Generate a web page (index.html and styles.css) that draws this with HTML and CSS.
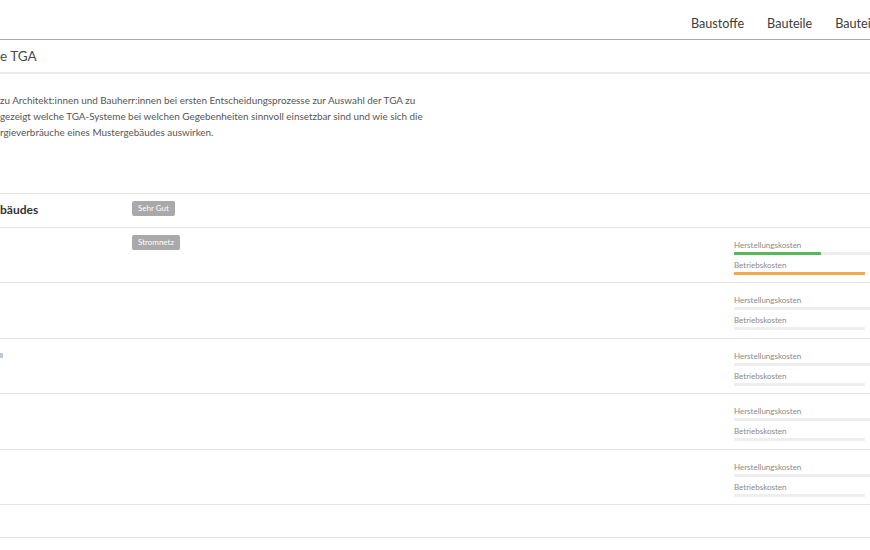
FILE: index.html
```html
<!DOCTYPE html>
<html lang="de">
<head>
    <meta charset="UTF-8">
    <meta name="viewport" content="width=device-width, initial-scale=1.0">
    <title>TGA</title>
    <link rel="stylesheet" href="styles.css">
</head>
<body>
    <header class="topnav">
        <a href="#">Baustoffe</a>
        <a href="#">Bauteile</a>
        <a href="#">Bauteilkatalog</a>
    </header>

    <div class="page-title">e TGA</div>

    <div class="intro">
        <p>zu Architekt:innen und Bauherr:innen bei ersten Entscheidungsprozesse zur Auswahl der TGA zu<br>
        gezeigt welche TGA-Systeme bei welchen Gegebenheiten sinnvoll einsetzbar sind und wie sich die<br>
        rgieverbräuche eines Mustergebäudes auswirken.</p>
    </div>

    <div class="systems">
        <div class="row head">
            <div class="name">bäudes</div>
            <div class="tags"><span class="badge">Sehr Gut</span></div>
            <div class="costs"></div>
        </div>

        <div class="row">
            <div class="name"></div>
            <div class="tags"><span class="badge">Stromnetz</span></div>
            <div class="costs">
                <div class="cost">
                    <span class="label">Herstellungskosten</span>
                    <div class="track"><div class="fill green" style="width: 62%"></div></div>
                </div>
                <div class="cost">
                    <span class="label">Betriebskosten</span>
                    <div class="track short"><div class="fill orange" style="width: 100%"></div></div>
                </div>
            </div>
        </div>

        <div class="row">
            <div class="name"></div>
            <div class="tags"></div>
            <div class="costs">
                <div class="cost">
                    <span class="label">Herstellungskosten</span>
                    <div class="track"></div>
                </div>
                <div class="cost">
                    <span class="label">Betriebskosten</span>
                    <div class="track short"></div>
                </div>
            </div>
        </div>

        <div class="row">
            <div class="name"><span class="icon"></span></div>
            <div class="tags"></div>
            <div class="costs">
                <div class="cost">
                    <span class="label">Herstellungskosten</span>
                    <div class="track"></div>
                </div>
                <div class="cost">
                    <span class="label">Betriebskosten</span>
                    <div class="track short"></div>
                </div>
            </div>
        </div>

        <div class="row">
            <div class="name"></div>
            <div class="tags"></div>
            <div class="costs">
                <div class="cost">
                    <span class="label">Herstellungskosten</span>
                    <div class="track"></div>
                </div>
                <div class="cost">
                    <span class="label">Betriebskosten</span>
                    <div class="track short"></div>
                </div>
            </div>
        </div>

        <div class="row">
            <div class="name"></div>
            <div class="tags"></div>
            <div class="costs">
                <div class="cost">
                    <span class="label">Herstellungskosten</span>
                    <div class="track"></div>
                </div>
                <div class="cost">
                    <span class="label">Betriebskosten</span>
                    <div class="track short"></div>
                </div>
            </div>
        </div>

        <div class="row empty"></div>
    </div>
</body>
</html>
```

FILE: styles.css
```css
body {
    font-family: Lato, "Open Sans", Arial, sans-serif;
    margin: 0;
    background-color: #ffffff;
    color: #444;
    overflow: hidden;
}

.topnav {
    display: flex;
    gap: 23px;
    height: 39px;
    padding-left: 691px;
    align-items: center;
    border-bottom: 1px solid #a9a9a9;
    white-space: nowrap;
    overflow: hidden;
}

.topnav a {
    font-size: 12.6px;
    color: #3c3c3c;
    text-decoration: none;
    padding-top: 8px;
}

.page-title {
    height: 32px;
    line-height: 33px;
    font-size: 13.5px;
    color: #4a4a4a;
    border-bottom: 2px solid #ececec;
}

.intro {
    height: 119px;
    border-bottom: 1px solid #e6e6e6;
}

.intro p {
    margin: 0;
    padding-top: 18px;
    font-size: 9.9px;
    line-height: 16px;
    color: #555;
    white-space: nowrap;
}

.row {
    display: grid;
    grid-template-columns: 132px 602px 1fr;
    height: 54.4px;
    border-bottom: 1px solid #e3e3e3;
}

.row.head {
    height: 33px;
}

.row.empty {
    height: 32px;
}

.name {
    font-size: 12px;
    font-weight: 700;
    color: #333;
    padding-top: 8px;
}

.icon {
    display: block;
    width: 3px;
    height: 5px;
    margin-top: 6px;
    background: #bccadb;
}

.tags {
    display: flex;
    align-items: flex-start;
    padding-top: 7px;
}

.badge {
    display: block;
    background: #a9a9a9;
    color: #fff;
    font-size: 8px;
    line-height: 15px;
    padding: 0 6px;
    border-radius: 2px;
}

.costs {
    padding-top: 11px;
    overflow: hidden;
}

.cost {
    height: 20px;
}

.label {
    display: block;
    font-size: 8px;
    line-height: 12px;
    color: #8a8a8a;
}

.track {
    width: 140px;
    height: 3px;
    margin-top: 1px;
    background: #eeeeee;
}

.track.short {
    width: 131px;
}

.fill {
    height: 3px;
}

.green {
    background: #58b75a;
}

.orange {
    background: #f2aa4c;
}
```
